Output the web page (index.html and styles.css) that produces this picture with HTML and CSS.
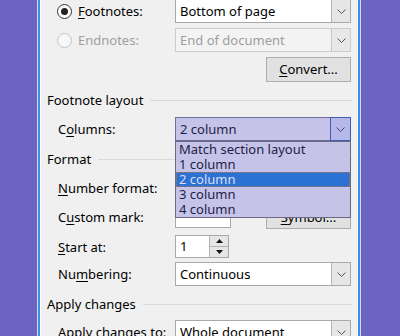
FILE: index.html
```html
<!DOCTYPE html>
<html>
<head>
<meta charset="utf-8">
<link rel="stylesheet" href="styles.css">
</head>
<body>
<div class="frame">
  <div class="dialog">
    <div class="row r-foot">
      <div class="radio-label"><span class="radio checked"></span><span><u>F</u>ootnotes:</span></div>
      <div class="combo"><span class="val">Bottom of page</span><span class="btn"><svg class="chev" width="9" height="5" viewBox="0 0 9 5"><path d="M0.5 0.5 L4.5 4.5 L8.5 0.5"/></svg></span></div>
    </div>
    <div class="row r-end">
      <div class="radio-label disabled"><span class="radio"></span><span>Endnotes:</span></div>
      <div class="combo disabled"><span class="val">End of document</span><span class="btn"><svg class="chev" width="9" height="5" viewBox="0 0 9 5"><path d="M0.5 0.5 L4.5 4.5 L8.5 0.5"/></svg></span></div>
    </div>
    <div class="row r-convert">
      <span></span>
      <div class="button convert"><u>C</u>onvert...</div>
    </div>

    <div class="group g-layout"><span>Footnote layout</span></div>
    <div class="row r-columns">
      <div class="label">C<u>o</u>lumns:</div>
      <div class="combo focus">
        <span class="val">2 column</span><span class="btn"><svg class="chev" width="9" height="5" viewBox="0 0 9 5"><path d="M0.5 0.5 L4.5 4.5 L8.5 0.5"/></svg></span>
        <ul class="list">
          <li>Match section layout</li>
          <li>1 column</li>
          <li class="sel">2 column</li>
          <li>3 column</li>
          <li>4 column</li>
        </ul>
      </div>
    </div>

    <div class="group g-format"><span>Format</span></div>
    <div class="row r-numfmt">
      <div class="label"><u>N</u>umber format:</div>
      <div class="combo"><span class="val"></span><span class="btn"><svg class="chev" width="9" height="5" viewBox="0 0 9 5"><path d="M0.5 0.5 L4.5 4.5 L8.5 0.5"/></svg></span></div>
    </div>
    <div class="row r-custom">
      <div class="label">C<u>u</u>stom mark:</div>
      <div class="pair">
        <div class="field small"></div>
        <div class="button symbol"><u>S</u>ymbol...</div>
      </div>
    </div>
    <div class="row r-start">
      <div class="label"><u>S</u>tart at:</div>
      <div class="spin">
        <span class="val">1</span>
        <span class="spin-btns">
          <span class="sbtn"><svg width="7" height="4" viewBox="0 0 7 4"><path d="M0 4 L3.5 0 L7 4 Z"/></svg></span>
          <span class="sbtn"><svg width="7" height="4" viewBox="0 0 7 4"><path d="M0 0 L7 0 L3.5 4 Z"/></svg></span>
        </span>
      </div>
    </div>
    <div class="row r-numbering">
      <div class="label">Nu<u>m</u>bering:</div>
      <div class="combo"><span class="val">Continuous</span><span class="btn"><svg class="chev" width="9" height="5" viewBox="0 0 9 5"><path d="M0.5 0.5 L4.5 4.5 L8.5 0.5"/></svg></span></div>
    </div>

    <div class="group g-apply"><span>Apply changes</span></div>
    <div class="row r-applyto">
      <div class="label">A<u>p</u>ply changes to:</div>
      <div class="combo"><span class="val">Whole document</span><span class="btn"><svg class="chev" width="9" height="5" viewBox="0 0 9 5"><path d="M0.5 0.5 L4.5 4.5 L8.5 0.5"/></svg></span></div>
    </div>
  </div>
</div>
</body>
</html>
```

FILE: styles.css
```css
html, body {
  margin: 0;
  padding: 0;
  height: 336px;
  overflow: hidden;
  background: #6c64c2;
}

body {
  font-family: "Noto Sans", "Open Sans", sans-serif;
  font-size: 13px;
  color: #000;
}

.frame {
  margin-left: 38px;
  width: 318px;
  height: 400px;
  border-left: 2px solid #3c8fe4;
  border-right: 2px solid #3c8fe4;
  box-shadow: -1px 0 0 #cfdcf2, 1px 0 0 #cfdcf2;
}

.dialog {
  height: 100%;
  border-left: 1px solid #ffffff;
  border-right: 1px solid #ffffff;
  background: #f0f0f0;
}

u {
  text-decoration: underline;
  text-underline-offset: 2px;
  text-decoration-thickness: 1px;
}

.row {
  display: grid;
  grid-template-columns: 117px 176px;
  align-items: center;
  padding-left: 17px;
  height: 24px;
}

.r-foot { margin-top: -1px; }
.r-end { margin-top: 5px; }
.r-convert { margin-top: 5px; height: 25px; }
.r-columns { margin-top: 9px; }
.r-numfmt { margin-top: 9px; }
.r-custom { margin-top: 4px; height: 25px; }
.r-start { margin-top: 6px; height: 23px; }
.r-numbering { margin-top: 4px; }
.r-applyto { margin-top: 8px; }

.label, .radio-label {
  line-height: 16px;
  white-space: nowrap;
}

.radio-label {
  display: flex;
  align-items: center;
  margin-left: -1px;
}

.radio-label.disabled { color: #a0a0a0; }

.radio {
  box-sizing: border-box;
  width: 15px;
  height: 15px;
  border: 1px solid #333333;
  border-radius: 50%;
  background: #ffffff;
  margin-right: 6px;
  display: flex;
  align-items: center;
  justify-content: center;
}

.radio.checked::after {
  content: "";
  width: 7px;
  height: 7px;
  border-radius: 50%;
  background: #222222;
}

.radio-label.disabled .radio {
  border-color: #c4c4c4;
  background: #f7f7f7;
}

.group {
  display: flex;
  align-items: center;
  height: 16px;
  line-height: 16px;
  padding: 0 5px 0 6px;
  margin-top: 10px;
}

.group::after {
  content: "";
  flex: 1;
  height: 1px;
  background: #d9d9d9;
  margin-left: 7px;
}

.combo {
  position: relative;
  box-sizing: border-box;
  height: 24px;
  border: 1px solid #a9a9a9;
  background: #ffffff;
  display: flex;
  align-items: stretch;
}

.combo .val {
  flex: 1;
  padding-left: 4px;
  line-height: 22px;
  white-space: nowrap;
  overflow: hidden;
}

.combo .btn {
  box-sizing: border-box;
  width: 19px;
  border-left: 1px solid #b4b4b4;
  background: #e6e6e6;
  display: flex;
  align-items: center;
  justify-content: center;
}

.chev path {
  fill: none;
  stroke: #555555;
  stroke-width: 1;
}

.combo.disabled {
  border-color: #cccccc;
  background: #f3f3f3;
  color: #9e9e9e;
}

.combo.disabled .btn {
  border-left-color: #c6c6c6;
  background: #e8e8e8;
}

.combo.focus {
  border-color: #6e6e9a;
  background: #c6c3e8;
  color: #1e1e48;
}

.combo.focus .btn {
  border: 1px solid #3d5fae;
  margin: -1px -1px -1px 0;
  width: 21px;
  background: #b6b8ea;
}

.combo.focus .chev path { stroke: #444466; }

.list {
  position: absolute;
  left: -1px;
  top: 23px;
  width: 176px;
  box-sizing: border-box;
  margin: 0;
  padding: 0;
  list-style: none;
  border: 1px solid #6a6a80;
  background: #c6c3e8;
  color: #1e1e48;
  z-index: 5;
}

.list li {
  height: 15px;
  line-height: 15px;
  padding-left: 3px;
  white-space: nowrap;
}

.list li.sel {
  background: #2c72d4;
  color: #dcdcf6;
  outline: 1px dotted #b87840;
  outline-offset: -1px;
}

.button {
  box-sizing: border-box;
  border: 1px solid #adadad;
  background: #e1e1e1;
  text-align: center;
  white-space: nowrap;
}

.convert {
  justify-self: end;
  width: 85px;
  height: 25px;
  line-height: 23px;
}

.pair {
  display: flex;
  align-items: center;
  justify-content: space-between;
}

.field {
  box-sizing: border-box;
  border: 1px solid #a9a9a9;
  background: #ffffff;
}

.field.small {
  width: 56px;
  height: 22px;
}

.symbol {
  width: 85px;
  height: 24px;
  line-height: 22px;
}

.spin {
  box-sizing: border-box;
  width: 54px;
  height: 23px;
  border: 1px solid #a9a9a9;
  background: #ffffff;
  display: flex;
}

.spin .val {
  flex: 1;
  padding-left: 4px;
  line-height: 21px;
}

.spin-btns {
  width: 18px;
  display: flex;
  flex-direction: column;
  border-left: 1px solid #b4b4b4;
}

.sbtn {
  flex: 1;
  background: #e6e6e6;
  display: flex;
  align-items: center;
  justify-content: center;
}

.sbtn + .sbtn { border-top: 1px solid #b4b4b4; }

.sbtn path { fill: #111111; }
```
